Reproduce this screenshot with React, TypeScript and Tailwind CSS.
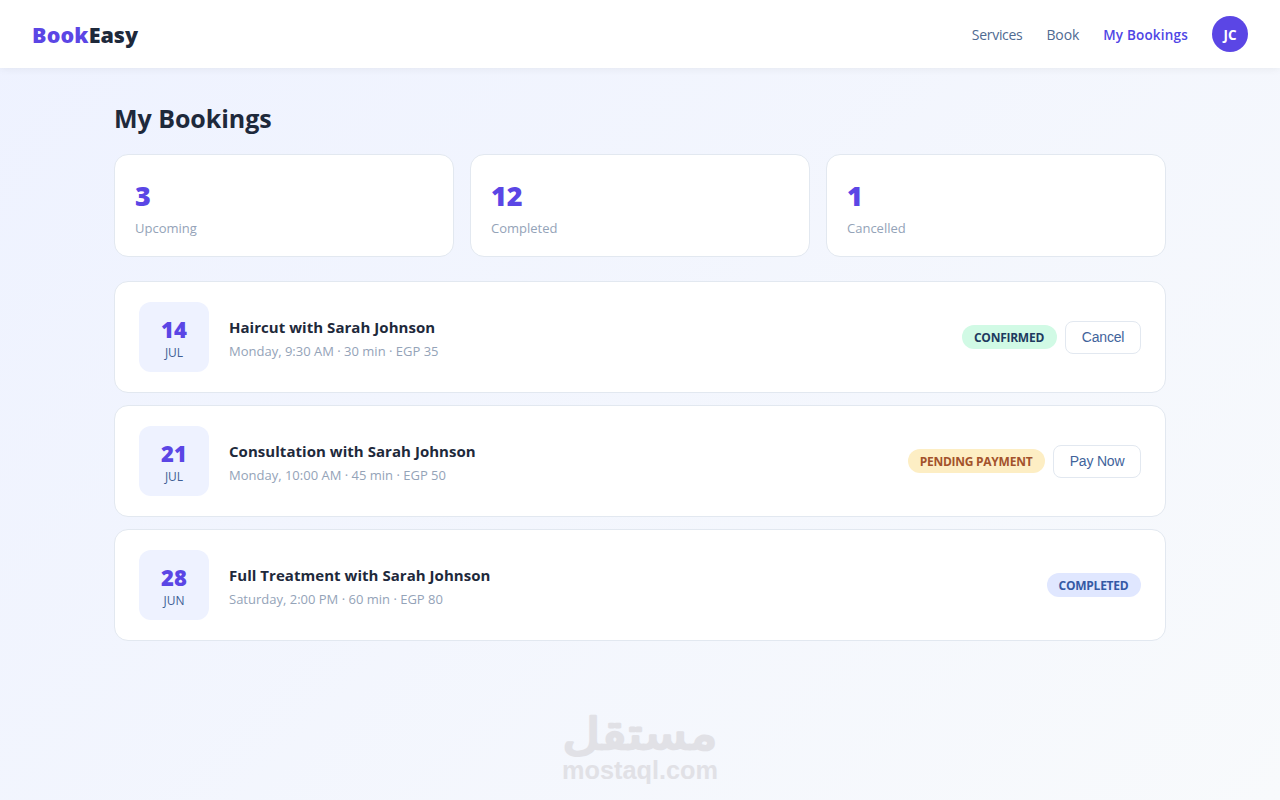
import clsx from "clsx";

const navLinks = [
  { label: "Services", className: "tracking-[-0.3px]", active: false },
  { label: "Book", className: "tracking-[-0.15px]", active: false },
  { label: "My Bookings", className: "tracking-[0.2px]", active: true },
];

const stats = [
  { value: "3", label: "Upcoming" },
  { value: "12", label: "Completed" },
  { value: "1", label: "Cancelled" },
];

const bookings = [
  {
    day: "14",
    month: "JUL",
    title: "Haircut with Sarah Johnson",
    meta: "Monday, 9:30 AM · 30 min · EGP 35",
    status: "CONFIRMED",
    badge: "w-[95px] bg-[#d1fae5] text-[#1e3a5f]",
    action: "Cancel",
    actionWidth: "w-[76px]",
  },
  {
    day: "21",
    month: "JUL",
    title: "Consultation with Sarah Johnson",
    meta: "Monday, 10:00 AM · 45 min · EGP 50",
    status: "PENDING PAYMENT",
    badge: "w-[137px] bg-[#fdeec4] text-[#a3522b]",
    action: "Pay Now",
    actionWidth: "w-[88px]",
  },
  {
    day: "28",
    month: "JUN",
    title: "Full Treatment with Sarah Johnson",
    meta: "Saturday, 2:00 PM · 60 min · EGP 80",
    status: "COMPLETED",
    badge: "w-[94px] bg-[#e0e7ff] text-[#3559a5]",
    action: null,
    actionWidth: "",
  },
];

function Header() {
  return (
    <header className="relative flex h-[68px] items-center justify-between bg-white px-8 shadow-[0_1px_8px_rgba(0,0,0,0.06)]">
      <div className="pt-0.5 text-[21.5px] leading-8 font-extrabold text-[#1e293b]">
        <span className="tracking-[0.15px] text-[#5b46e5]">Book</span>Easy
      </div>
      <nav className="flex items-center gap-6">
        {navLinks.map((link) => (
          <a
            key={link.label}
            href="#"
            className={clsx(
              "pt-0.5",
              link.className,
              link.active ? "text-[13.5px] font-semibold text-[#4f46e5]" : "text-sm text-[#4f6a92]",
            )}
          >
            {link.label}
          </a>
        ))}
        <div className="flex h-9 w-9 items-center justify-center rounded-full bg-[#5b46e5] pt-0.5 text-[13.5px] font-bold text-white">
          JC
        </div>
      </nav>
    </header>
  );
}

function Watermark() {
  return (
    <svg
      width="180"
      height="96"
      viewBox="-10 -10 180 96"
      className="pointer-events-none absolute top-[698px] left-[550px] overflow-visible fill-[#e1e1e6]"
    >
      <text
        x="80"
        y="41"
        textAnchor="middle"
        direction="rtl"
        textLength="155"
        lengthAdjust="spacingAndGlyphs"
        strokeLinejoin="round"
        className="stroke-[#e1e1e6] stroke-[2.5px] font-['DejaVu_Sans',sans-serif] text-[44px]"
      >
        مستقل
      </text>
      <text
        x="80"
        y="71"
        textAnchor="middle"
        textLength="156"
        lengthAdjust="spacingAndGlyphs"
        className="font-['Liberation_Sans',Arial,sans-serif] text-[25px] font-bold"
      >
        mostaql.com
      </text>
    </svg>
  );
}

export default function App() {
  return (
    <div className="relative min-h-screen bg-linear-135 from-[#eef2ff] to-[#f8fafc] font-['Open_Sans','Noto_Sans',sans-serif] text-[#1e293b]">
      <Header />
      <main className="mx-auto max-w-[1100px] px-6 pt-8">
        <h1 className="pb-0.5 text-[25px] leading-9 font-bold tracking-[-0.05px]">My Bookings</h1>

        <section className="mt-4 grid grid-cols-3 gap-4">
          {stats.map((stat) => (
            <div key={stat.label} className="h-[103px] rounded-[14px] border border-[#e2e8f0] bg-white px-5 pt-5">
              <div className="text-[27px] leading-[42px] font-extrabold text-[#5b46e5]">{stat.value}</div>
              <div className="text-[13px] leading-[23px] text-[#94a3b8]">{stat.label}</div>
            </div>
          ))}
        </section>

        <section className="mt-6 flex flex-col gap-3">
          {bookings.map((booking) => (
            <article
              key={booking.title}
              className="flex items-center gap-5 rounded-[14px] border border-[#e2e8f0] bg-white px-6 py-5"
            >
              <div className="flex h-[70px] w-[70px] flex-col items-center justify-center rounded-xl bg-[#eef2ff] pt-1.5">
                <div className="text-[22px] leading-[25px] font-extrabold text-[#5b46e5]">{booking.day}</div>
                <div className="text-xs leading-[22px] text-[#3f5f95]">{booking.month}</div>
              </div>
              <div className="flex-1 pt-[3px]">
                <h2 className="text-[15px] leading-6 font-bold tracking-[0.04px]">{booking.title}</h2>
                <p className="text-[13px] leading-6 text-[#94a3b8]">{booking.meta}</p>
              </div>
              <div className="flex items-center gap-2">
                <span
                  className={clsx(
                    "flex h-6 items-center justify-center rounded-full pt-px pr-px text-xs font-bold whitespace-nowrap tracking-[-0.25px]",
                    booking.badge,
                  )}
                >
                  {booking.status}
                </span>
                {booking.action && (
                  <button
                    type="button"
                    className={clsx(
                      "h-[33px] rounded-lg border border-[#e2e8f0] bg-white font-['Liberation_Sans',Arial,sans-serif] text-sm tracking-[-0.2px] text-[#41639b]",
                      booking.actionWidth,
                    )}
                  >
                    {booking.action}
                  </button>
                )}
              </div>
            </article>
          ))}
        </section>
      </main>
      <Watermark />
    </div>
  );
}
